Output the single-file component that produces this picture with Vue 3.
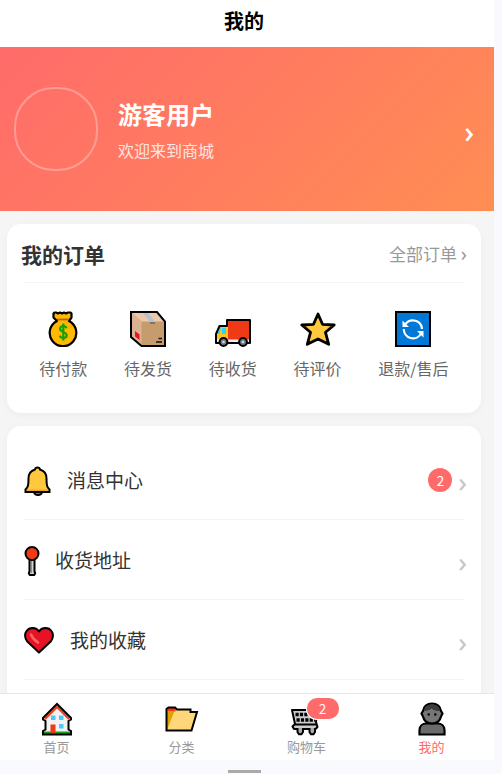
<script setup>
import { ref } from 'vue'

const orders = [
  { id: 'pay', label: '待付款' },
  { id: 'ship', label: '待发货' },
  { id: 'receive', label: '待收货' },
  { id: 'review', label: '待评价' },
  { id: 'refund', label: '退款/售后' }
]

const menu = [
  { id: 'bell', label: '消息中心', badge: 2 },
  { id: 'pin', label: '收货地址' },
  { id: 'heart', label: '我的收藏' }
]

const tabs = [
  { id: 'home', label: '首页' },
  { id: 'category', label: '分类' },
  { id: 'cart', label: '购物车', badge: 2 },
  { id: 'mine', label: '我的' }
]

const active = ref('mine')
</script>

<template>
  <div class="page">
    <div class="app">
      <header class="topbar"><h1>我的</h1></header>

      <main class="content">
        <button type="button" class="profile">
          <span class="avatar"></span>
          <span class="who">
            <span class="name">游客用户</span>
            <span class="welcome">欢迎来到商城</span>
          </span>
          <span class="chevron light">›</span>
        </button>

        <section class="card orders">
          <div class="card-head">
            <h2>我的订单</h2>
            <a href="#orders" class="all">全部订单 <span class="more">›</span></a>
          </div>
          <div class="order-list">
            <a v-for="o in orders" :key="o.id" :href="'#' + o.id" class="order">
              <svg v-if="o.id === 'pay'" width="36" height="36" viewBox="0 0 36 36" aria-hidden="true">
                <path d="M9.500 1.500h1.500l2 1 2-1 2 1 2-1 2 1 2-1h2.500l1 1v4l-2.500 3.500a13.300 13.300 0 1 1-12 0L8.500 6.500v-4z" fill="#ffb900" stroke="#000" stroke-width="2.200" stroke-linejoin="round" />
                <path d="M12 8.500h12" stroke="#b4621f" stroke-width="1.800" />
                <path d="M18.300 12.500v17M21.500 17.300c-.5-1.700-1.700-2.300-3.200-2.300-2 0-3.300 1-3.300 2.800 0 3.700 6.700 2.700 6.700 6.500 0 1.800-1.400 2.700-3.400 2.700-1.800 0-3-.8-3.500-2.300" fill="none" stroke="#13a10e" stroke-width="2.200" />
              </svg>
              <svg v-else-if="o.id === 'ship'" width="36" height="36" viewBox="0 0 36 36" aria-hidden="true">
                <path d="M1 1h26l8 9.500V35H11.500L1 26z" fill="#c69c6d" />
                <path d="M1 1h26l8 9.500H11.500z" fill="#e8c9ae" />
                <path d="M1 1l10.500 9.500V35L1 26z" fill="#dcb392" />
                <path d="M12 1h5l8 9.500V13h-5v-2.500z" fill="#b9c1c6" />
                <path d="M20 11h5v2h-5z" fill="#767778" />
                <path d="M5 20l4.500 3.500v5.500L5 25.500z" fill="#e81224" />
                <path d="M28.500 27.500H32M26 31h6" stroke="#111" stroke-width="1.400" />
                <path d="M1 1h26l8 9.500V35H11.500L1 26z" fill="none" stroke="#000" stroke-width="2" />
              </svg>
              <svg v-else-if="o.id === 'receive'" width="36" height="36" viewBox="0 0 36 36" aria-hidden="true">
                <path d="M1 31V23l3.500-8H12V9h23v23H1z" fill="#f03a17" />
                <path d="M1 31v-8l3.500-8H13v17H1z" fill="#ffc31f" />
                <path d="M7 17h4v6H7z" fill="#31d2f7" />
                <path d="M4.500 16h1.500l-1.500 7H2z" fill="#31d2f7" />
                <path d="M13 28.500h21V31H13zM2 28h3v3H2z" fill="#eee" />
                <path d="M1 32V23l3.500-8H12V9h23v23z" fill="none" stroke="#000" stroke-width="2" stroke-linejoin="round" />
                <circle cx="8.500" cy="31" r="3.900" fill="#727981" stroke="#000" stroke-width="2" />
                <circle cx="28" cy="31" r="3.900" fill="#727981" stroke="#000" stroke-width="2" />
                <circle cx="8.500" cy="31" r="1.300" fill="#ccd3da" />
                <circle cx="28" cy="31" r="1.300" fill="#ccd3da" />
              </svg>
              <svg v-else-if="o.id === 'review'" width="36" height="36" viewBox="0 0 36 36" aria-hidden="true">
                <path d="M18 3l4.500 10.300 11.700.7-8.700 7.300 3.200 12L18 28 7.300 33.300l3.200-12L1.800 14l11.700-.7z" fill="#ffc83d" stroke="#000" stroke-width="2.800" stroke-linejoin="round" />
              </svg>
              <svg v-else width="36" height="36" viewBox="0 0 36 36" aria-hidden="true">
                <path d="M1 1h34v34H1z" fill="#0078d7" stroke="#000" stroke-width="2" />
                <path d="M10.500 13A9.200 9.200 0 0 1 27 18M25.800 23A9.200 9.200 0 0 1 8.800 18" fill="none" stroke="#fff" stroke-width="2.200" />
                <path d="M7.500 9.500V16H14zM28.500 26.500V20H22z" fill="#fff" />
              </svg>
              <span>{{ o.label }}</span>
            </a>
          </div>
        </section>

        <section class="card menu">
          <a v-for="m in menu" :key="m.id" :href="'#' + m.id" class="row">
            <svg v-if="m.id === 'bell'" width="28" height="32" viewBox="0 0 28 32" aria-hidden="true">
              <path d="M10 28a4 3 0 0 0 8 0z" fill="#a56a2c" stroke="#000" stroke-width="2" />
              <path d="M13.500 3.500c1.500 0 2.300.8 2.500 2 4.500 1.300 6.500 4.500 6.500 9 0 7 .5 8.500 3 11V28H1.500v-2.500c2.500-2.500 3-4 3-11 0-4.500 2-7.700 6.500-9 .2-1.200 1-2 2.500-2z" fill="#ffc83d" stroke="#000" stroke-width="2" />
              <path d="M3 26.300h21" stroke="#e8a52f" stroke-width="1.500" />
            </svg>
            <svg v-else-if="m.id === 'pin'" width="16" height="32" viewBox="0 0 16 32" aria-hidden="true">
              <path d="M5.500 15h5v12.500l.7 1.700-1 1.800H5.800l-1-1.800.7-1.700z" fill="#d0d4d8" stroke="#000" stroke-width="2" stroke-linejoin="round" />
              <path d="M7.500 16v13" stroke="#8b9095" stroke-width="1" />
              <circle cx="8" cy="9.500" r="6.500" fill="#f03a17" stroke="#000" stroke-width="2" />
            </svg>
            <svg v-else width="31" height="32" viewBox="0 0 31 32" aria-hidden="true">
              <path d="M15 28.500L3.300 17.500C.5 14.500.5 9.500 2.500 7c3-4 9.500-4 12.500.5C18 3 24.500 3 27.500 7c2 2.500 2 7.500-.8 10.500z" fill="#e81224" stroke="#000" stroke-width="2" stroke-linejoin="round" />
              <path d="M7 10.500c1.500 3.500 3.500 6 7 8" stroke="#f2665b" stroke-width="2.600" fill="none" stroke-linecap="round" />
            </svg>
            <span class="label">{{ m.label }}</span>
            <span v-if="m.badge" class="count">{{ m.badge }}</span>
            <span class="chevron">›</span>
          </a>
        </section>
      </main>

      <nav class="tabs">
        <a v-for="t in tabs" :key="t.id" :href="'#' + t.id" class="tab" :class="{ active: active === t.id }" @click="active = t.id">
          <span class="tab-icon">
            <svg v-if="t.id === 'home'" width="32" height="34" viewBox="0 0 32 34" aria-hidden="true">
              <path d="M4 32V16.500L16 4l12 12.500V32z" fill="#f2f2f2" />
              <path d="M2 29.500h28v3H2z" fill="#13a10e" />
              <path d="M9.500 22.500h5V31h-5z" fill="#f03a17" />
              <path d="M10 13.500h4.500V18H10zM18 13.500h4.500V18H18zM18 22h4.500v4.500H18z" fill="#50c8f5" />
              <path d="M4 17L16 5l12 12" stroke="#f03a17" stroke-width="2" fill="none" />
              <path d="M4.500 27.500V19L2 17.500V16L16 2l14 14v1.500L27.500 19v8.500L30 29v3.500H2V29z" fill="none" stroke="#000" stroke-width="2" />
            </svg>
            <svg v-else-if="t.id === 'category'" width="34" height="34" viewBox="0 0 34 34" aria-hidden="true">
              <path d="M1.500 28.500V7l2-1.500H10l2 2h13.500V10H32l-5.500 18.500z" fill="#ffd67a" />
              <path d="M2 28V10h7z" fill="#dfa000" />
              <path d="M2.500 6h8v3.500h-8z" fill="#f03a17" />
              <path d="M1.500 28.500V7l2-1.500H10l2 2h13.500V10H32l-5.500 18.500z" fill="none" stroke="#000" stroke-width="2" />
            </svg>
            <svg v-else-if="t.id === 'cart'" width="32" height="34" viewBox="0 0 32 34" aria-hidden="true">
              <path d="M1 8h22l3 3-1 9 1.500 5-2 2H3l-1.500-2.500L4 22z" fill="#ccc" stroke="#000" stroke-width="2" stroke-linejoin="round" />
              <path d="M4.500 12.500H24M5.500 18H24" stroke="#000" stroke-width="3.600" stroke-dasharray="3.200 1.200" />
              <path d="M3.500 22.500H25" stroke="#000" stroke-width="2" />
              <path d="M6.500 26v4l1.500 2.200h2.500L12 30v-4M18.500 26v4l1.500 2.200h2.500L24 30v-4" fill="#aaa" stroke="#000" stroke-width="2" />
            </svg>
            <svg v-else width="32" height="34" viewBox="0 0 32 34" aria-hidden="true">
              <path d="M3.500 32.500V28c0-4 3-6.500 7-6.500h11c4 0 7 2.500 7 6.500v4.500z" fill="#6b6b6b" stroke="#000" stroke-width="2.200" />
              <path d="M16 1.500c5 0 8.500 3 9 7.500l1.500 2.500-1.500 3C24 19 20.500 21.500 16 21.500S8 19 7 14.500l-1.500-3L7 9c.5-4.500 4-7.500 9-7.500z" fill="#767676" stroke="#000" stroke-width="2.200" />
              <path d="M8 9c1-4 4-6.500 8-6.500S23.500 5 24 9c-4 0-6-.5-8.500-2.500C13.500 8 11 9 8 9z" fill="#3b3b3b" />
              <circle cx="12.700" cy="12.500" r="1.200" /><circle cx="19.300" cy="12.500" r="1.200" />
            </svg>
            <span v-if="t.badge" class="tab-badge">{{ t.badge }}</span>
          </span>
          <span>{{ t.label }}</span>
        </a>
      </nav>
      <div class="home-bar"><span></span></div>
    </div>
  </div>
</template>

<style>
body {
  overflow: hidden;
  background: #f9fafe;
}
</style>

<style scoped>
.page {
  font-family: "Noto Sans CJK SC", sans-serif;
  color: #333;
}
.app {
  display: flex;
  flex-direction: column;
  height: 100vh;
  margin: 0 8px 0 -6px;
}
a {
  color: inherit;
  text-decoration: none;
}
h1, h2 {
  margin: 0;
}
.topbar {
  display: flex;
  flex: none;
  align-items: center;
  justify-content: center;
  height: 47px;
  padding-bottom: 6px;
  box-sizing: border-box;
  background: #fff;
  color: #000;
}
.topbar h1 {
  font-size: 20px;
  line-height: 28px;
  font-weight: 700;
}
.content {
  flex: 1;
  min-height: 0;
  overflow: hidden;
  background: #f5f5f5;
}
.profile {
  display: flex;
  align-items: center;
  gap: 20px;
  width: 100%;
  height: 164px;
  padding: 0 20px;
  border: 0;
  background: linear-gradient(135deg, #ff6b6b, #ff8e53);
  color: #fff;
  font-family: inherit;
  text-align: left;
}
.avatar {
  width: 84px;
  height: 84px;
  box-sizing: border-box;
  border: 2px solid rgba(255, 255, 255, 0.3);
  border-radius: 40px;
}
.who {
  display: flex;
  flex: 1;
  flex-direction: column;
  gap: 8px;
  padding-top: 2px;
}
.name {
  font-size: 24px;
  line-height: 32px;
  font-weight: 700;
}
.welcome {
  font-size: 16px;
  line-height: 24px;
  opacity: 0.8;
}
.chevron,
.more {
  font-family: "Noto Sans", sans-serif;
}
.chevron {
  padding-top: 2px;
  color: #c4c4c4;
  font-size: 28px;
  line-height: 32px;
}
.chevron.light {
  padding-top: 6px;
  color: #fff;
  font-size: 30px;
  font-weight: 500;
}
.more {
  font-size: 20px;
}
.card {
  margin: 13px;
  padding: 14px;
  border-radius: 14px;
  background: #fff;
  box-shadow: 0 2px 8px rgba(0, 0, 0, 0.04);
}
.card.menu {
  padding-bottom: 40px;
}
.card-head {
  display: flex;
  align-items: center;
  justify-content: space-between;
  height: 44px;
  padding-bottom: 12px;
  box-sizing: border-box;
}
.card-head h2 {
  font-size: 21px;
  line-height: 32px;
  font-weight: 700;
}
.all {
  color: #999;
  font-size: 17px;
  line-height: 24px;
}
.order-list {
  position: relative;
  display: flex;
  justify-content: space-around;
  padding: 29px 0 19px;
}
.order-list::before,
.row::after {
  content: "";
  position: absolute;
  right: 3px;
  left: 3px;
  height: 1px;
  background: #f4f4f4;
}
.order-list::before {
  top: 0;
}
.order {
  display: flex;
  flex-direction: column;
  align-items: center;
  gap: 9px;
  color: #666;
  font-size: 16px;
  line-height: 24px;
}
.order svg,
.row svg,
.tab svg {
  display: block;
  flex: none;
}
.row {
  position: relative;
  display: flex;
  align-items: center;
  height: 80px;
  padding-left: 3px;
}
.row::after {
  bottom: 0;
}
.label {
  flex: 1;
  margin-left: 15px;
  font-size: 19px;
  line-height: 28px;
}
.count {
  width: 24px;
  height: 24px;
  margin-right: 6px;
  border-radius: 12px;
  background: #ff6b6b;
  color: #fff;
  font-size: 14px;
  line-height: 24px;
  text-align: center;
}
.tabs {
  display: flex;
  flex: none;
  height: 66px;
  border-top: 1px solid #e5e5e5;
  background: #fff;
}
.tab {
  display: flex;
  flex: 1;
  flex-direction: column;
  align-items: center;
  padding-top: 8px;
  color: #999;
  font-size: 13px;
  line-height: 22px;
}
.tab.active {
  color: #ff6b6b;
}
.tab-icon {
  position: relative;
}
.tab-badge {
  position: absolute;
  top: -4px;
  left: 16px;
  width: 32px;
  border-radius: 10px;
  background: #ff6b6b;
  color: #fff;
  font-size: 13px;
  line-height: 21px;
  text-align: center;
  box-shadow: 0 0 0 1px #fff;
}
.home-bar {
  display: flex;
  flex: none;
  align-items: flex-end;
  justify-content: center;
  height: 14px;
  padding-bottom: 1px;
  box-sizing: border-box;
}
.home-bar span {
  width: 33px;
  height: 3px;
  background: #aaa;
}
</style>
